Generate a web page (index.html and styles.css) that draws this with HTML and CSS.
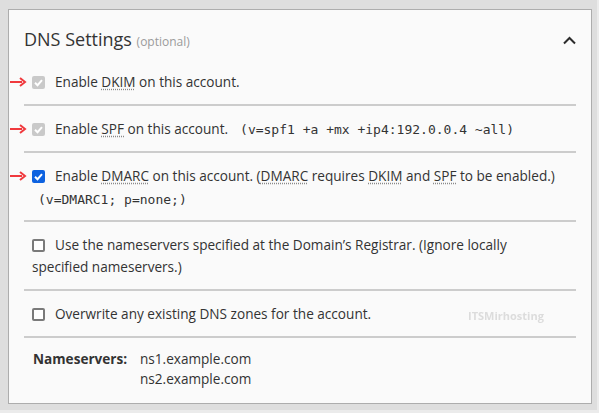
FILE: index.html
```html
<!DOCTYPE html>
<html lang="en">
<head>
<meta charset="utf-8">
<title>DNS Settings</title>
<link rel="stylesheet" href="styles.css">
</head>
<body>
<div class="frame">
  <section class="panel">
    <header class="panel-head">
      <h2 class="title">DNS Settings <span class="optional">(optional)</span></h2>
      <svg class="chev" width="13" height="9" viewBox="0 0 13 9" aria-hidden="true"><polyline points="1,7.5 6.5,2 12,7.5" fill="none" stroke="#2b2b2b" stroke-width="2"/></svg>
    </header>

    <div class="row">
      <svg class="pointer" width="18" height="10" viewBox="0 0 18 10" aria-hidden="true"><line x1="0" y1="5" x2="12" y2="5" stroke="#f0393d" stroke-width="2"/><polyline points="10,1 15,5 10,9" fill="none" stroke="#f0393d" stroke-width="2"/></svg>
      <label class="opt"><span class="cb cb-off"><svg viewBox="0 0 13 13" width="13" height="13"><polyline points="3,6.8 5.5,9.2 10,4.2" fill="none" stroke="#fff" stroke-width="2"/></svg></span>Enable <abbr>DKIM</abbr> on this account.</label>
    </div>

    <div class="row">
      <svg class="pointer" width="18" height="10" viewBox="0 0 18 10" aria-hidden="true"><line x1="0" y1="5" x2="12" y2="5" stroke="#f0393d" stroke-width="2"/><polyline points="10,1 15,5 10,9" fill="none" stroke="#f0393d" stroke-width="2"/></svg>
      <label class="opt"><span class="cb cb-off"><svg viewBox="0 0 13 13" width="13" height="13"><polyline points="3,6.8 5.5,9.2 10,4.2" fill="none" stroke="#fff" stroke-width="2"/></svg></span>Enable <abbr>SPF</abbr> on this account.<code class="rec rec-inline">(v=spf1 +a +mx +ip4:192.0.0.4 ~all)</code></label>
    </div>

    <div class="row">
      <svg class="pointer" width="18" height="10" viewBox="0 0 18 10" aria-hidden="true"><line x1="0" y1="5" x2="12" y2="5" stroke="#f0393d" stroke-width="2"/><polyline points="10,1 15,5 10,9" fill="none" stroke="#f0393d" stroke-width="2"/></svg>
      <label class="opt"><span class="cb cb-on"><svg viewBox="0 0 13 13" width="13" height="13"><polyline points="3,6.8 5.5,9.2 10,4.2" fill="none" stroke="#fff" stroke-width="2"/></svg></span>Enable <abbr>DMARC</abbr> on this account. (<abbr>DMARC</abbr> requires <abbr>DKIM</abbr> and <abbr>SPF</abbr> to be enabled.)</label>
      <code class="rec rec-block">(v=DMARC1; p=none;)</code>
    </div>

    <div class="row">
      <label class="opt"><span class="cb cb-empty"></span>Use the nameservers specified at the Domain’s Registrar. (Ignore locally specified nameservers.)</label>
    </div>

    <div class="row">
      <label class="opt"><span class="cb cb-empty"></span>Overwrite any existing DNS zones for the account.</label>
      <span class="watermark">ITSMirhosting</span>
    </div>

    <dl class="ns">
      <dt>Nameservers:</dt>
      <dd>ns1.example.com<br>ns2.example.com</dd>
    </dl>
  </section>
</div>
</body>
</html>
```

FILE: styles.css
```css
html, body {
  margin: 0;
  padding: 0;
}
body {
  background: #ebebeb;
  font-family: "Open Sans", "Noto Sans", sans-serif;
  color: #333;
}
.frame {
  width: 597px;
  box-sizing: border-box;
  padding: 9px 5px 6px 8px;
  background: #dedede;
}
.panel {
  position: relative;
  background: #fafafa;
  border: 1px solid #adadad;
  padding: 0 15px;
}
.panel-head {
  display: flex;
  justify-content: space-between;
  align-items: center;
  padding-top: 16px;
  margin-bottom: 7px;
}
.title {
  margin: 0;
  font-size: 18px;
  font-weight: 400;
  line-height: 26px;
  height: 26px;
  color: #333;
}
.optional {
  font-size: 12px;
  line-height: 1;
  color: #9a9a9a;
}
.chev {
  display: block;
  margin-top: 2px;
}
.row {
  position: relative;
  padding: 12px 15px 11px 8px;
  border-bottom: 2px solid #cccccc;
  font-size: 13.6px;
  line-height: 22px;
}
.opt {
  display: block;
}
.pointer {
  position: absolute;
  left: -14px;
  top: 18px;
}
.cb {
  display: inline-block;
  box-sizing: border-box;
  width: 13px;
  height: 13px;
  border-radius: 2px;
  margin-right: 10px;
  vertical-align: -2px;
}
.cb svg {
  display: block;
}
.cb-off {
  background: #c9c9c9;
}
.cb-on {
  background: #0d62e0;
}
.cb-empty {
  background: #fff;
  border: 2px solid #7a7a7a;
}
abbr {
  text-decoration: underline dotted #8a8a8a;
  text-underline-offset: 2px;
}
.rec {
  font-family: "DejaVu Sans Mono", monospace;
  font-size: 13px;
  color: #333;
}
.rec-inline {
  margin-left: 12px;
  line-height: 1;
}
.rec-block {
  display: block;
  margin-top: 4px;
  line-height: 18px;
  padding-left: 6px;
}
.watermark {
  position: absolute;
  left: 444px;
  top: 17px;
  font-size: 11px;
  line-height: 15px;
  font-weight: 700;
  color: #dcdcdc;
  filter: blur(0.3px);
}
.ns {
  display: grid;
  grid-template-columns: 107px auto;
  margin: 0;
  padding: 11px 0 14px 9px;
  font-size: 13.6px;
  line-height: 20px;
}
.ns dt {
  font-weight: 700;
}
.ns dd {
  margin: 0;
}
```
